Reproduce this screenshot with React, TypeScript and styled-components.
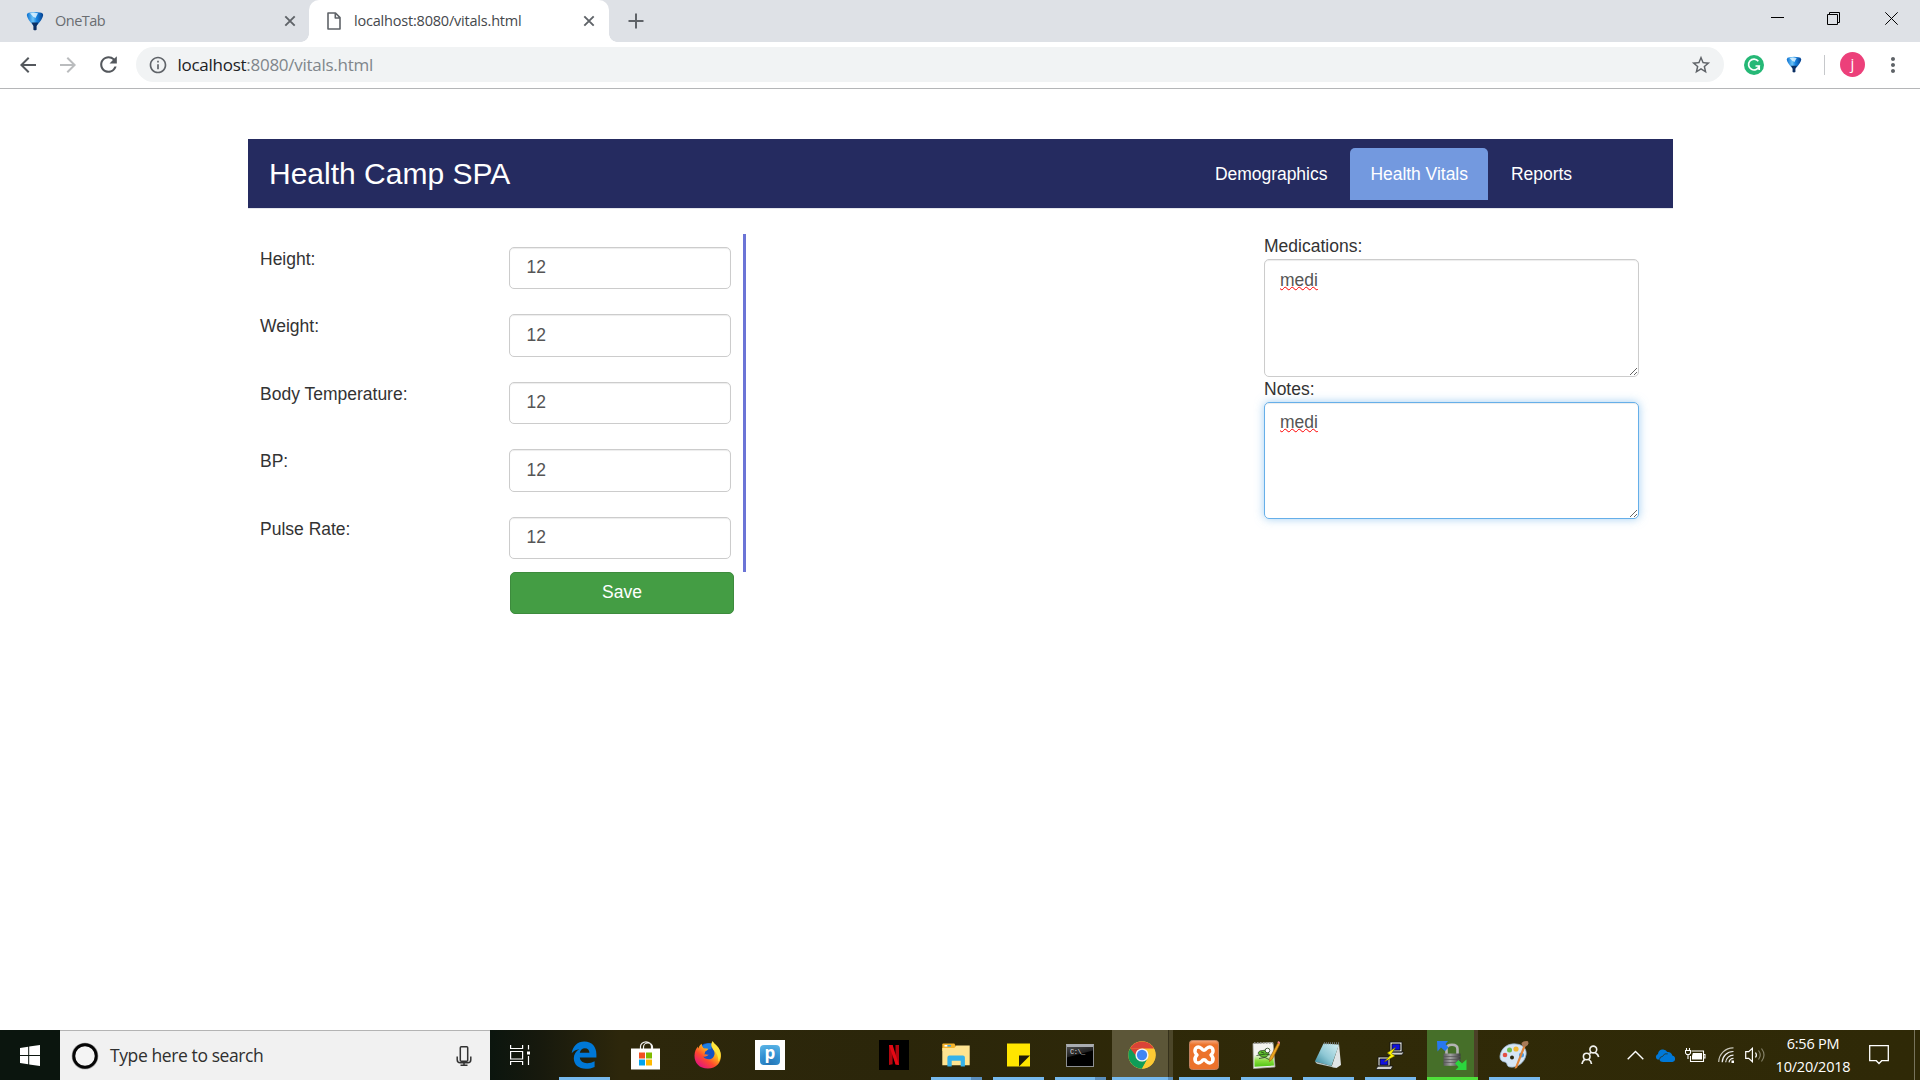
import React from "react";
import styled, { createGlobalStyle, css } from "styled-components";
import {
  MdArrowBack,
  MdArrowForward,
  MdRefresh,
  MdInfoOutline,
  MdStarBorder,
  MdMoreVert,
} from "react-icons/md";

const GlobalStyle = createGlobalStyle`
  *, *::before, *::after { box-sizing: border-box; }
  body { margin: 0; background: #fff; overflow: hidden; }
  svg { display: block; flex: none; }
`;

const uiFont = `"Open Sans", "Noto Sans", sans-serif`;
const pageFont = `"Liberation Sans", Arial, sans-serif`;

const Screen = styled.div`
  width: 1920px;
  height: 1080px;
  display: flex;
  flex-direction: column;
  background: #fff;
  font-family: ${pageFont};
`;

/* ---------- browser chrome ---------- */

const TabStrip = styled.header`
  height: 42px;
  flex: none;
  display: flex;
  align-items: stretch;
  background: #dee1e6;
  font-family: ${uiFont};
`;

const Tab = styled.div<{ $active?: boolean; $width: number; $pad: number }>`
  position: relative;
  width: ${(p) => p.$width}px;
  padding-left: ${(p) => p.$pad}px;
  padding-right: ${(p) => (p.$active ? 14 : 13)}px;
  display: flex;
  align-items: center;
  font-size: 14.5px;
  color: #6a6d71;
  ${(p) =>
    p.$active &&
    css`
      background: #fff;
      color: #45484c;
      border-radius: 10px 10px 0 0;
      &::before,
      &::after {
        content: "";
        position: absolute;
        bottom: 0;
        width: 8px;
        height: 8px;
      }
      &::before {
        left: -8px;
        background: radial-gradient(circle at 0 0, transparent 7.5px, #fff 8px);
      }
      &::after {
        right: -8px;
        background: radial-gradient(circle at 100% 0, transparent 7.5px, #fff 8px);
      }
    `}
`;

const TabTitle = styled.span<{ $gap: number; $track: number }>`
  flex: 1;
  margin-left: ${(p) => p.$gap}px;
  line-height: 20px;
  white-space: nowrap;
  letter-spacing: ${(p) => p.$track}px;
  margin-top: -1px;
`;

const NewTab = styled.div`
  width: 54px;
  display: flex;
  align-items: center;
  justify-content: center;
`;

const WindowControls = styled.div`
  margin-left: auto;
  display: flex;
`;

const WindowButton = styled.div`
  width: 57px;
  height: 37px;
  display: flex;
  align-items: center;
  justify-content: center;
`;

const Toolbar = styled.div`
  height: 47px;
  flex: none;
  display: flex;
  align-items: center;
  padding: 0 15px 1px 8px;
  border-bottom: 1px solid #b5b6b8;
  color: #5f6368;
  font-family: ${uiFont};
`;

const ToolButton = styled.div<{ $faded?: boolean }>`
  width: 40px;
  display: flex;
  justify-content: center;
  color: ${(p) => (p.$faded ? "#babcbe" : "#54585d")};
`;

const AddressBar = styled.div`
  margin-left: 8px;
  width: 1588px;
  height: 35px;
  border-radius: 18px;
  background: #f1f3f4;
  display: flex;
  align-items: center;
  padding: 0 12px 0 12px;
`;

const Url = styled.span`
  flex: 1;
  margin-left: 9.5px;
  font-size: 17px;
  line-height: 24px;
  letter-spacing: -0.27px;
  color: #80868b;
  b {
    font-weight: 400;
    color: #202124;
  }
`;

const Extensions = styled.div`
  display: flex;
  align-items: center;
  flex: 1;
  padding-left: 20px;
`;

const ExtensionGap = styled.div`
  width: 22px;
`;

const Divider = styled.i`
  width: 1px;
  height: 20px;
  background: #c6c8cb;
  margin: 0 15px 0 22px;
`;

const Avatar = styled.div`
  width: 25px;
  height: 25px;
  border-radius: 50%;
  background: #ec407a;
  color: #fff;
  font-size: 15px;
  line-height: 22px;
  text-align: center;
  margin-right: 16px;
`;

/* ---------- page ---------- */

const Page = styled.main`
  flex: 1;
  padding: 50px 247px 0 248px;
  color: #333;
  font-size: 17.5px;
  line-height: 25px;
`;

const Navbar = styled.nav`
  height: 70px;
  display: flex;
  background: #252b60;
  border-bottom: 1px solid #e4e5ec;
  padding: 9px 81px 8px 21px;
`;

const Brand = styled.h1`
  margin: 0;
  flex: 1;
  color: #fff;
  font-size: 30px;
  font-weight: 400;
  line-height: 52px;
`;

const NavItem = styled.a<{ $active?: boolean }>`
  height: 52px;
  padding: 0 20px 0 20.5px;
  margin-left: 2.5px;
  border-radius: 5px 5px 0 0;
  color: #fff;
  line-height: 52px;
  letter-spacing: -0.03px;
  background: ${(p) => (p.$active ? "#7399df" : "transparent")};
`;

const Columns = styled.div`
  display: flex;
  justify-content: space-between;
  padding-top: 25px;
`;

const VitalsColumn = styled.form`
  width: 498px;
  margin: 0;
`;

const VitalsPanel = styled.div`
  border-right: 3px solid #6b74d6;
  padding-left: 12px;
`;

const Row = styled.div`
  height: 67.5px;
  padding: 12.5px 12px 0 0;
  display: flex;
  justify-content: space-between;
`;

const Label = styled.label`
  display: block;
`;

const Field = styled.input`
  width: 222px;
  height: 42.5px;
  padding: 7px 17px 7px 16.5px;
  border: 1px solid #ccc;
  border-radius: 5px;
  box-shadow: inset 0 1px 1px rgba(0, 0, 0, 0.075);
  color: #555;
  font: 17.5px/25px ${pageFont};
  outline: none;
`;

const SaveButton = styled.button`
  display: block;
  width: 224px;
  height: 42px;
  margin-left: 262px;
  padding: 0;
  border: 1px solid #3d8b3d;
  border-radius: 5px;
  background: #449d44;
  color: #fff;
  font: 17.5px/25px ${pageFont};
`;

const NotesColumn = styled.section`
  width: 375px;
  margin-right: 34px;
`;

const TextArea = styled.div<{ $focused?: boolean; $height: number }>`
  height: ${(p) => p.$height}px;
  padding: ${(p) => (p.$focused ? 7 : 8)}px 15px;
  overflow: hidden;
  resize: vertical;
  border: 1px solid ${(p) => (p.$focused ? "#66afe9" : "#ccc")};
  border-radius: 5px;
  color: #555;
  box-shadow: inset 0 1px 1px rgba(0, 0, 0, 0.075)
    ${(p) => (p.$focused ? ", 0 0 10px rgba(102, 175, 233, 0.6)" : "")};
`;

const Misspelled = styled.span`
  text-decoration: underline wavy #f00 1.2px;
  text-underline-offset: 0;
  text-decoration-skip-ink: none;
`;

/* ---------- taskbar ---------- */

const Taskbar = styled.footer`
  height: 50px;
  flex: none;
  display: flex;
  background: linear-gradient(90deg, #0b150e 0, #0b150e 490px, #17190d 540px, #2d270b 620px, #2b260a 900px, #302a08 1300px, #2f2907 100%);
  color: #fff;
  font-family: ${uiFont};
`;

const StartButton = styled.div`
  width: 60px;
  display: flex;
  align-items: center;
  justify-content: center;
`;

const SearchBox = styled.div`
  width: 430px;
  background: #f1f1f1;
  border-top: 1px solid #b4b4b4;
  display: flex;
  align-items: center;
  padding: 0 18px 0 11px;
  color: #2f2f2f;
`;

const SearchText = styled.span`
  flex: 1;
  margin: -2px 0 0 11px;
  font-size: 17.5px;
  line-height: 24px;
  letter-spacing: -0.4px;
`;

const TaskView = styled.div`
  width: 63px;
  display: flex;
  align-items: center;
  padding-left: 20px;
`;

const TaskCell = styled.div<{ $state?: "open" | "stack" | "active" | "alert" }>`
  width: 62px;
  display: flex;
  flex-direction: column;
  align-items: center;
  justify-content: space-between;
  ${(p) =>
    p.$state === "active" &&
    css`
      background: linear-gradient(90deg, transparent 1px, #5c5638 1px, #5c5638 57px, #35301a 57px, #35301a 58px, #4c4629 58px);
    `}
  ${(p) =>
    p.$state === "alert" &&
    css`
      background: linear-gradient(90deg, transparent 6px, #466f29 6px, #466f29 53px, #4b4027 53px, #4b4027 57px, transparent 57px);
    `}
`;

const IconSlot = styled.div`
  height: 47px;
  padding-top: 3px;
  display: flex;
  align-items: center;
  justify-content: center;
`;

const barFill = {
  open: "#76b9ed",
  stack: "linear-gradient(90deg, #76b9ed 40px, #5a8ebc 40px)",
  active: "linear-gradient(90deg, #76b9ed 56px, #5a8ebc 56px)",
  alert: "#4fe03a",
};

const RunningBar = styled.i<{ $state: keyof typeof barFill }>`
  height: 3px;
  width: ${(p) => (p.$state === "active" ? 61 : 51)}px;
  margin-left: 1px;
  background: ${(p) => barFill[p.$state]};
`;

const Tray = styled.div`
  margin-left: auto;
  display: flex;
  align-items: center;
`;

const TrayIcon = styled.div<{ $left: number }>`
  margin-left: ${(p) => p.$left}px;
`;

const Clock = styled.div`
  width: 94px;
  text-align: center;
  font-size: 14.5px;
  line-height: 23px;
  letter-spacing: -0.22px;
  white-space: nowrap;
`;

const ShowDesktop = styled.i`
  width: 6px;
  height: 50px;
  margin-left: 25px;
  border-left: 1px solid #77735c;
`;

/* ---------- drawings ---------- */

const OneTabIcon = ({ w = 18, h = 20 }: { w?: number; h?: number }) => (
  <svg width={w} height={h} viewBox="0 0 18 20" preserveAspectRatio="none">
    <defs>
      <linearGradient id="onetab" x1="0" x2="1">
        <stop offset="0" stopColor="#0a6fd0" />
        <stop offset=".38" stopColor="#6cc4f8" />
        <stop offset=".6" stopColor="#1683e0" />
        <stop offset="1" stopColor="#063f8c" />
      </linearGradient>
    </defs>
    <path d="M.8 4Q1 1.500 4 1.500 9 .4 14 1.500q3 0 3.200 2.500Q16.800 8 10.800 14.500H7.200Q1.200 8 .8 4z" fill="url(#onetab)" />
    <path d="M5.500 11.500h7L10.600 15v3.800q-1.600 1-3.200 0V15z" fill="#0b2f63" />
    <path d="M4 2.300q5-1.300 8 0L9.500 7 7 5.500z" fill="#dff3ff" opacity=".85" />
  </svg>
);

const CloseIcon = () => (
  <svg width="12" height="12" viewBox="0 0 12 12">
    <path d="M1.300 1.300l9.400 9.400M10.700 1.300l-9.400 9.400" stroke="#5f6368" strokeWidth="1.900" />
  </svg>
);

const FileIcon = () => (
  <svg width="14" height="18" viewBox="0 0 14 18">
    <path d="M1 1h7.500L13 5.600V17H1z M8.300 1v5H13" fill="none" stroke="#5f6368" strokeWidth="1.600" strokeLinejoin="round" />
  </svg>
);

const GrammarlyIcon = () => (
  <svg width="20" height="20" viewBox="0 0 20 20">
    <circle cx="10" cy="10" r="10" fill="#25b876" />
    <path d="M14.300 6.300A5.400 5.400 0 1 0 15.200 11H11.500M15.200 11v4" fill="none" stroke="#fff" strokeWidth="1.700" />
  </svg>
);

const WindowsLogo = () => (
  <svg width="20" height="21" viewBox="0 0 20 21">
    <path d="M0 3l8.200-1.200v8.200H0zM9.200 1.600L20 0v10H9.200zM0 11h8.200v8.200L0 18zM9.200 11H20v10L9.200 19.400z" fill="#fff" />
  </svg>
);

const CortanaRing = () => (
  <svg width="28" height="28" viewBox="0 0 28 28">
    <circle cx="14" cy="14" r="13.300" fill="#999" />
    <circle cx="14" cy="14" r="11.200" fill="#f4f4f4" stroke="#050505" strokeWidth="2.900" />
  </svg>
);

const MicIcon = () => (
  <svg width="16" height="20" viewBox="0 0 16 20" fill="none" stroke="#333" strokeWidth="1.500">
    <rect x="4.300" y=".8" width="7.400" height="14.500" rx="1" />
    <path d="M1.200 10.500v3.300q0 3 3 3h7.600q3 0 3-3v-3.300M8 17v2M4.500 19.200h7" />
  </svg>
);

const TaskViewIcon = () => (
  <svg width="20" height="20" viewBox="0 0 20 20" fill="none" stroke="#fff" strokeWidth="1.200">
    <path d="M.6 0v3.500h12V0M.6 20v-3.500h12V20M.6 6.500h12v7.500H.6zM18.500 0v4.500M18.500 11v9" />
    <rect x="17" y="6.500" width="3" height="3" fill="#fff" stroke="none" />
  </svg>
);

const EdgeIcon = () => (
  <svg width="26" height="28" viewBox="0 0 26 28">
    <path d="M.7 12.300C1.700 5.200 6.600.5 13.300.5c7.700 0 12.100 5.400 12.100 12.700v3.400H8.800c.3 3.600 3.400 5.600 7.300 5.600 2.800 0 5.300-.7 7.500-2v5.700c-2.700 1.300-5.600 1.800-8.800 1.800-7.100 0-12-3.900-12-10.400 0-4 2.200-7.200 5.600-9C4.900 8.700 2.500 9.900.7 12.300zm8.100-.5h9.600c0-2.900-1.600-4.600-4.500-4.600-2.700 0-4.600 1.800-5.100 4.600z" fill="#0078d7" />
  </svg>
);

const StoreIcon = () => (
  <svg width="30" height="29" viewBox="0 0 30 29">
    <path d="M9.500 8V5.500a5.500 4.700 0 0 1 11 0V8M12.500 8V6a4.500 4 0 0 1 9 0v2" fill="none" stroke="#f4f4f4" strokeWidth="1.200" />
    <path d="M0 7.500h29v21H0z" fill="#fff" />
    <path d="M8 11.500h6v6H8z" fill="#f25022" />
    <path d="M15 11.500h6v6h-6z" fill="#7fba00" />
    <path d="M8 18.500h6v6H8z" fill="#00a4ef" />
    <path d="M15 18.500h6v6h-6z" fill="#ffb900" />
  </svg>
);

const FirefoxIcon = () => (
  <svg width="28" height="28" viewBox="0 0 28 28">
    <defs>
      <linearGradient id="fox" x1=".85" y1="0" x2=".15" y2=".9">
        <stop offset="0" stopColor="#fff44f" />
        <stop offset=".4" stopColor="#ffb31a" />
        <stop offset=".68" stopColor="#ff4a2e" />
        <stop offset="1" stopColor="#e3137f" />
      </linearGradient>
    </defs>
    <circle cx="14" cy="12.500" r="10.500" fill="#1552c4" />
    <path d="M8 5Q13 1 19 3l-2 5-5 1z" fill="#1d7fe0" />
    <path d="M18.700.3c1 2.500 3.500 3.500 5.500 6.200 6 8.500 1.700 21-10.200 21C5 27.500.3 21.500.5 14.500.6 10.500 2 7.500 4 5.500c-.1 1 0 1.600.3 2.100C5.200 5 6.300 3.500 7.800 2.800c-.2 1.900 1 3.400 2.200 4.400l4.200.6c-.3 1.600-2.300 2.100-3.200 3 .1 1-.2 1.700-1 2.700 1.500-.5 3.100.4 4.600.1-1.200 1.800-3.400 2.400-5.400 1.900 1.800 3.200 8 4 10.400.2 2.300-3.800 0-7-1.600-9.200-1.300-2-.8-4.500.7-6.200z" fill="url(#fox)" />
    <path d="M18.700.3c1 2.500 3.500 3.500 5.500 6.200 3 4.500 3.200 9.800.3 14.200 0-5-1.500-8.500-4.700-11.500-2-2.200-2.600-6.300-1.100-8.900z" fill="#ffe63d" />
  </svg>
);

const PTile = styled.div`
  width: 30px;
  height: 30px;
  display: flex;
  align-items: center;
  justify-content: center;
  background: #fff;
`;

const PBadge = styled.div`
  width: 20px;
  height: 20px;
  border-radius: 4px;
  background: radial-gradient(circle at 50% 100%, #2474b4 0, #3290d2 50%, #5fb8e8 100%);
  color: #fff;
  font: 700 17px/15px ${uiFont};
  text-align: center;
`;

const NetflixIcon = () => (
  <svg width="30" height="30" viewBox="0 0 30 30">
    <path d="M0 0h30v30H0z" />
    <path d="M10 5h3.600v19.300l-3.600.7zM16.500 5H20v20l-3.500-.7z" fill="#b1060f" />
    <path d="M10 5h3.600L20 25l-3.500-.6z" fill="#e50914" />
  </svg>
);

const FolderIcon = () => (
  <svg width="28" height="24" viewBox="0 0 28 24">
    <path d="M.3 1.500Q.3.500 1.300.500h11l1.500 2.500v5H.3z" fill="#f5b52d" />
    <path d="M2.500 2h3v1.600h-3z" fill="#fff" />
    <path d="M5.500 2h3.500v1.600H5.500z" fill="#3ea4de" />
    <path d="M.3 5h12l2-2.500h13.400v19.700H.3z" fill="#ffe490" />
    <path d="M5.400 23.500v-9q0-2 2-2h13.500q2 0 2 2v9h-4.200v-5.700h-9v5.700z" fill="#35b2ea" />
  </svg>
);

const StickyIcon = () => (
  <svg width="23" height="24" viewBox="0 0 23 24">
    <path d="M0 .5h23v23H0z" fill="#ffe500" />
    <path d="M12 12.500h11l-11 11z" fill="#1f1b08" />
  </svg>
);

const CmdMark = styled.span`
  position: absolute;
  left: 3px;
  top: 1px;
  font: 7px/8px "Liberation Mono", monospace;
  letter-spacing: -0.5px;
  color: #ddd;
`;

const CmdWindow = styled.div`
  position: relative;
  width: 28px;
  height: 23px;
  border: 1px solid #8d8f92;
  border-top: 3px solid #a9acb0;
  background: linear-gradient(165deg, #4b4b4b 0, #222 38%, #000 42%);
`;

const ChromeIcon = () => (
  <svg width="28" height="28" viewBox="0 0 48 48">
    <circle cx="24" cy="24" r="23.500" fill="#fcc934" />
    <path d="M3.650 12.250A23.500 23.500 0 0 0 24 47.500l10.200-17.700L24 35z" fill="#0f9d58" />
    <path d="M3.650 12.250L13.800 29.800 24 24z" fill="#0f9d58" />
    <path d="M24 13h20.350A23.500 23.500 0 0 1 24 47.500L34 29z" fill="#fcc934" />
    <path d="M3.650 12.250A23.500 23.500 0 0 1 44.350 13H24z" fill="#db4437" />
    <path d="M3.650 12.250L13.500 27 24 13z" fill="#db4437" />
    <path d="M3.650 12.250L14 30l2-1.500z" fill="#0f9d58" />
    <circle cx="24" cy="24" r="11.300" fill="#f4f4f4" />
    <circle cx="24" cy="24" r="8.800" fill="#4285f4" />
  </svg>
);

const XamppIcon = () => (
  <svg width="30" height="30" viewBox="0 0 30 30">
    <defs>
      <linearGradient id="xampp" x1="0" y1="0" x2="0" y2="1">
        <stop offset="0" stopColor="#f6a77a" />
        <stop offset=".15" stopColor="#ec722b" />
      </linearGradient>
    </defs>
    <rect x=".5" y=".5" width="29" height="29" rx="3" fill="url(#xampp)" stroke="#c0805f" />
    <path
      d="M12.500 8.500Q9 5.500 6.500 8.500 4.800 12 8 15 4.800 18 6.500 21.500 9 24.500 12.500 21.500 15 18 17.500 21.500 21 24.500 23.500 21.500 25.200 18 22 15 25.200 12 23.500 8.500 21 5.500 17.500 8.500 15 12 12.500 8.500z"
      fill="none"
      stroke="#fff"
      strokeWidth="3.400"
      strokeLinejoin="round"
    />
  </svg>
);

const NotepadPlusIcon = () => (
  <svg width="28" height="28" viewBox="0 0 28 28">
    <defs>
      <linearGradient id="npp" x1="0" y1="0" x2="0" y2="1">
        <stop offset=".45" stopColor="#f3f3f0" />
        <stop offset=".72" stopColor="#8ade3c" />
        <stop offset="1" stopColor="#4fc414" />
      </linearGradient>
    </defs>
    <path d="M1 2.500l20-1L23 26 1.500 27.500z" fill="#f3f3f0" stroke="#a8aaa2" strokeWidth=".8" />
    <path d="M2.200 5l18.500-1 1.300 20.500-19.500 1.300z" fill="url(#npp)" />
    <path d="M6 12q1-3 5-2.500 3-1.500 4.500 1 3 2-.5 5-6 2.500-9-3.500z" fill="#5fc02e" stroke="#26401c" strokeWidth=".7" />
    <circle cx="15.500" cy="9.500" r="2.300" fill="#fff" stroke="#26401c" strokeWidth=".8" />
    <path d="M4.500 14.500l9-1.500 5 1M7 17.500l6-1 4 2M9 11l3 1" stroke="#26401c" strokeWidth=".8" fill="none" />
    <path d="M2 2h19" stroke="#999" strokeDasharray="1.500 1.500" strokeWidth="1.500" />
    <path d="M26 1.500l2 1.500-7.500 15-3 2.500.3-3.800z" fill="#eba51f" stroke="#8b5213" strokeWidth=".6" />
    <path d="M26 0l2 1v2l-2.500-1z" fill="#ef7b82" />
  </svg>
);

const NotepadIcon = () => (
  <svg width="28" height="28" viewBox="0 0 28 28">
    <defs>
      <linearGradient id="pad" x1="1" y1="0" x2="0" y2="1">
        <stop offset="0" stopColor="#d5f0f4" />
        <stop offset=".55" stopColor="#8fc8d5" />
        <stop offset="1" stopColor="#2f8196" />
      </linearGradient>
    </defs>
    <path d="M25 3l2 21-4.500 3-5-1z" fill="#dfe4e6" />
    <path d="M9.500 2.500l15.500 1L17.500 25 .8 20.500z" fill="url(#pad)" />
    <path d="M.8 20.500L17.500 25l5 2L3 22.700z" fill="#b8c6c9" />
    <path d="M10 2.200h15" stroke="#70797b" strokeWidth="2" strokeDasharray="1 1" />
  </svg>
);

const PuttyIcon = () => (
  <svg width="29" height="29" viewBox="0 0 29 29">
    <g stroke="#111" strokeWidth=".8">
      <path d="M14 1h12v10H14zM12 13l3-2h13l-2 3H12z" fill="#d2d2ce" />
      <path d="M2 16h12v9H2zM0 28l2-3h15l-2 3.500H0z" fill="#d2d2ce" />
      <path d="M16 3h8v6h-8zM4 18h8v6H4z" fill="#1010e0" />
    </g>
    <path d="M20 6l-9 6 3.500 2L8 21l11-6-3.500-2.500z" fill="#fff200" stroke="#4d4900" strokeWidth=".5" />
  </svg>
);

const WinScpIcon = () => (
  <svg width="30" height="29" viewBox="0 0 30 29">
    <defs>
      <linearGradient id="lock" x1="0" x2="1">
        <stop offset="0" stopColor="#5a5a5a" />
        <stop offset=".4" stopColor="#a2a2a2" />
        <stop offset="1" stopColor="#3c3c3c" />
      </linearGradient>
    </defs>
    <path d="M9.500 14V8q0-4.200 5.500-4.200T20.500 8v6" fill="none" stroke="#b4b4b4" strokeWidth="2.600" />
    <path d="M6.500 12.500h17v12.300h-17z" fill="url(#lock)" />
    <path d="M6.500 15.500h17M6.500 18.500h17M6.500 21.500h17" stroke="#555" strokeWidth=".7" />
    <path d="M0 0h11L8.500 3l3 3.500-3.500 3.500-4-3.500L.5 10.500z" fill="#2878ef" />
    <path d="M29.500 29h-11l3-3-3.500-3.500 3.500-3.500 3.500 3.500 4.500-4z" fill="#2bd63d" />
  </svg>
);

const PaintIcon = () => (
  <svg width="30" height="28" viewBox="0 0 30 28">
    <path d="M1 15C2 7 9 2 17 3c8 .5 11 6 10 11-1.500 8-9 13-16 12-4-.5-2-4-5-5-3-.3-5.300-2-5-6z" fill="#d5e6f5" stroke="#90adc7" strokeWidth=".8" />
    <circle cx="6" cy="14" r="2.300" fill="#e35145" />
    <circle cx="10.500" cy="9" r="2.500" fill="#6cba4d" />
    <circle cx="17" cy="8" r="2.600" fill="#f1b735" />
    <circle cx="22.500" cy="14" r="2.500" fill="#4a9be2" />
    <circle cx="13" cy="16.500" r="2" fill="#2b280e" />
    <path d="M24.500 4.500l2 1L18 27l-2.500.7z" fill="#e0853a" />
    <path d="M22.500 2Q25-.5 29 .3q1.500 4-2.500 5.500l-3.500-1z" fill="#a77a57" />
  </svg>
);

const PeopleIcon = () => (
  <svg width="19" height="20" viewBox="0 0 19 20" fill="none" stroke="#f2f2ee" strokeWidth="1.600">
    <circle cx="12.300" cy="4.500" r="3.400" />
    <path d="M10 7.500L8.500 8.500M14 7.500q3 1.500 3.700 4.500" />
    <circle cx="5.700" cy="11.500" r="3.300" />
    <path d="M1 19q.5-3.500 3-4.600M7.500 14.400q2.500 1.300 3 4.600" />
  </svg>
);

const ChevronUp = () => (
  <svg width="17" height="10" viewBox="0 0 17 10">
    <path d="M.7 9.200l7.800-7.800 7.800 7.800" fill="none" stroke="#fff" strokeWidth="1.400" />
  </svg>
);

const CloudIcon = () => (
  <svg width="20" height="13" viewBox="0 0 20 13">
    <path d="M2.500 10.500a3 3 0 0 1 .5-5.500A5 5 0 0 1 12.300 3a4.300 4.300 0 0 1 5 3.500A3.300 3.300 0 0 1 17.500 13H8q-3 0-3.700-2.500z" fill="#0078d7" />
    <path d="M4.500 10.500q.2-3 3.200-3.200 1.500-3.500 5-2.500" fill="none" stroke="#2f2907" strokeWidth=".7" />
  </svg>
);

const BatteryIcon = () => (
  <svg width="21" height="15" viewBox="0 0 21 15" fill="none" stroke="#fff" strokeWidth="1.100">
    <path d="M6.500 3h12v10.500h-13V8M19 6.500h1v3.500h-1" />
    <path d="M7.800 5h9.200v6.500H7V8z" fill="#fff" stroke="none" />
    <path d="M1.500 0v2.500M4.500 0v2.500M.5 2.500h5v2.500L4.300 6.500H1.700L.5 5zM3 6.500v4.500" />
  </svg>
);

const WifiIcon = () => (
  <svg width="16" height="16" viewBox="0 0 16 16" fill="none" strokeWidth="1.200">
    <path d="M.7 15A14.500 14.500 0 0 1 15.500.8" stroke="#c9c7ba" />
    <path d="M4.200 15.300A11 11 0 0 1 15.500 4.500M7.700 15.300a7.800 7.800 0 0 1 7.800-7.200M11 15.300a4.600 4.600 0 0 1 4.500-3.900" stroke="#eee" />
    <path d="M13.500 13.500H16V16h-2.500z" fill="#fff" />
  </svg>
);

const SpeakerIcon = () => (
  <svg width="21" height="16" viewBox="0 0 21 16" fill="none" strokeWidth="1.200">
    <path d="M.7 4.700h3L7.400 1.300v13.400L3.700 11.300h-3z" stroke="#fff" />
    <path d="M10.500 5.500q1.800 2.500 0 5" stroke="#fff" />
    <path d="M13.500 3.500q3.500 4.500 0 9M16.500 1.500q5 6.500 0 13" stroke="#858168" />
  </svg>
);

const NotificationIcon = () => (
  <svg width="20" height="20" viewBox="0 0 20 20">
    <path d="M.7.7h18.600v15h-6.600L10 18.500l-2.700-2.800H.7z" fill="none" stroke="#fff" strokeWidth="1.300" />
  </svg>
);

const vitals = ["Height:", "Weight:", "Body Temperature:", "BP:", "Pulse Rate:"];

type State = "open" | "stack" | "active" | "alert";

const tasks: { icon: React.ReactNode; state?: State }[] = [
  { icon: <EdgeIcon />, state: "open" },
  { icon: <StoreIcon /> },
  { icon: <FirefoxIcon /> },
  { icon: <PTile><PBadge>p</PBadge></PTile> },
  { icon: null },
  { icon: <NetflixIcon /> },
  { icon: <FolderIcon />, state: "stack" },
  { icon: <StickyIcon />, state: "open" },
  { icon: <CmdWindow><CmdMark>C:\_</CmdMark></CmdWindow>, state: "stack" },
  { icon: <ChromeIcon />, state: "active" },
  { icon: <XamppIcon />, state: "open" },
  { icon: <NotepadPlusIcon />, state: "open" },
  { icon: <NotepadIcon />, state: "open" },
  { icon: <PuttyIcon />, state: "open" },
  { icon: <WinScpIcon />, state: "alert" },
  { icon: <PaintIcon />, state: "open" },
];

export default function App() {
  return (
    <Screen>
      <GlobalStyle />
      <TabStrip>
        <Tab $width={309} $pad={26}>
          <OneTabIcon />
          <TabTitle $gap={11} $track={-0.5}>OneTab</TabTitle>
          <CloseIcon />
        </Tab>
        <Tab $active $width={300} $pad={18}>
          <FileIcon />
          <TabTitle $gap={13} $track={-0.2}>localhost:8080/vitals.html</TabTitle>
          <CloseIcon />
        </Tab>
        <NewTab>
          <svg width="16" height="16" viewBox="0 0 16 16">
            <path d="M8 .5v15M.5 8h15" stroke="#5f6368" strokeWidth="2" />
          </svg>
        </NewTab>
        <WindowControls>
          <WindowButton>
            <svg width="13" height="13"><path d="M0 5.500h13" stroke="#000" /></svg>
          </WindowButton>
          <WindowButton>
            <svg width="15" height="13">
              <path d="M.5 2.500h10v10H.5zM2.500 2.500v-2h10v10h-2" fill="none" stroke="#000" />
            </svg>
          </WindowButton>
          <WindowButton>
            <svg width="13" height="13"><path d="M.3.300l12.400 12.400M12.700.300L.3 12.700" stroke="#000" /></svg>
          </WindowButton>
        </WindowControls>
      </TabStrip>

      <Toolbar>
        <ToolButton><MdArrowBack size={24} /></ToolButton>
        <ToolButton $faded><MdArrowForward size={24} /></ToolButton>
        <ToolButton><MdRefresh size={25} /></ToolButton>
        <AddressBar>
          <MdInfoOutline size={20} />
          <Url><b>localhost</b>:8080/vitals.html</Url>
          <MdStarBorder size={22} />
        </AddressBar>
        <Extensions>
          <GrammarlyIcon />
          <ExtensionGap />
          <OneTabIcon w={16} h={17} />
          <Divider />
          <Avatar>j</Avatar>
          <MdMoreVert size={24} />
        </Extensions>
      </Toolbar>

      <Page>
        <Navbar>
          <Brand>Health Camp SPA</Brand>
          <NavItem>Demographics</NavItem>
          <NavItem $active>Health Vitals</NavItem>
          <NavItem>Reports</NavItem>
        </Navbar>
        <Columns>
          <VitalsColumn>
            <VitalsPanel>
              {vitals.map((name) => (
                <Row key={name}>
                  <Label>{name}</Label>
                  <Field defaultValue="12" />
                </Row>
              ))}
            </VitalsPanel>
            <SaveButton type="button">Save</SaveButton>
          </VitalsColumn>
          <NotesColumn>
            <Label>Medications:</Label>
            <TextArea $height={118}><Misspelled>medi</Misspelled></TextArea>
            <Label>Notes:</Label>
            <TextArea $height={117} $focused><Misspelled>medi</Misspelled></TextArea>
          </NotesColumn>
        </Columns>
      </Page>

      <Taskbar>
        <StartButton><WindowsLogo /></StartButton>
        <SearchBox>
          <CortanaRing />
          <SearchText>Type here to search</SearchText>
          <MicIcon />
        </SearchBox>
        <TaskView><TaskViewIcon /></TaskView>
        {tasks.map((task, i) => (
          <TaskCell key={i} $state={task.state}>
            <IconSlot>{task.icon}</IconSlot>
            {task.state && <RunningBar $state={task.state} />}
          </TaskCell>
        ))}
        <Tray>
          <TrayIcon $left={0}><PeopleIcon /></TrayIcon>
          <TrayIcon $left={27}><ChevronUp /></TrayIcon>
          <TrayIcon $left={11}><CloudIcon /></TrayIcon>
          <TrayIcon $left={10}><BatteryIcon /></TrayIcon>
          <TrayIcon $left={12}><WifiIcon /></TrayIcon>
          <TrayIcon $left={11}><SpeakerIcon /></TrayIcon>
          <Clock>
            <div>6:56 PM</div>
            <div>10/20/2018</div>
          </Clock>
          <TrayIcon $left={9}><NotificationIcon /></TrayIcon>
          <ShowDesktop />
        </Tray>
      </Taskbar>
    </Screen>
  );
}
